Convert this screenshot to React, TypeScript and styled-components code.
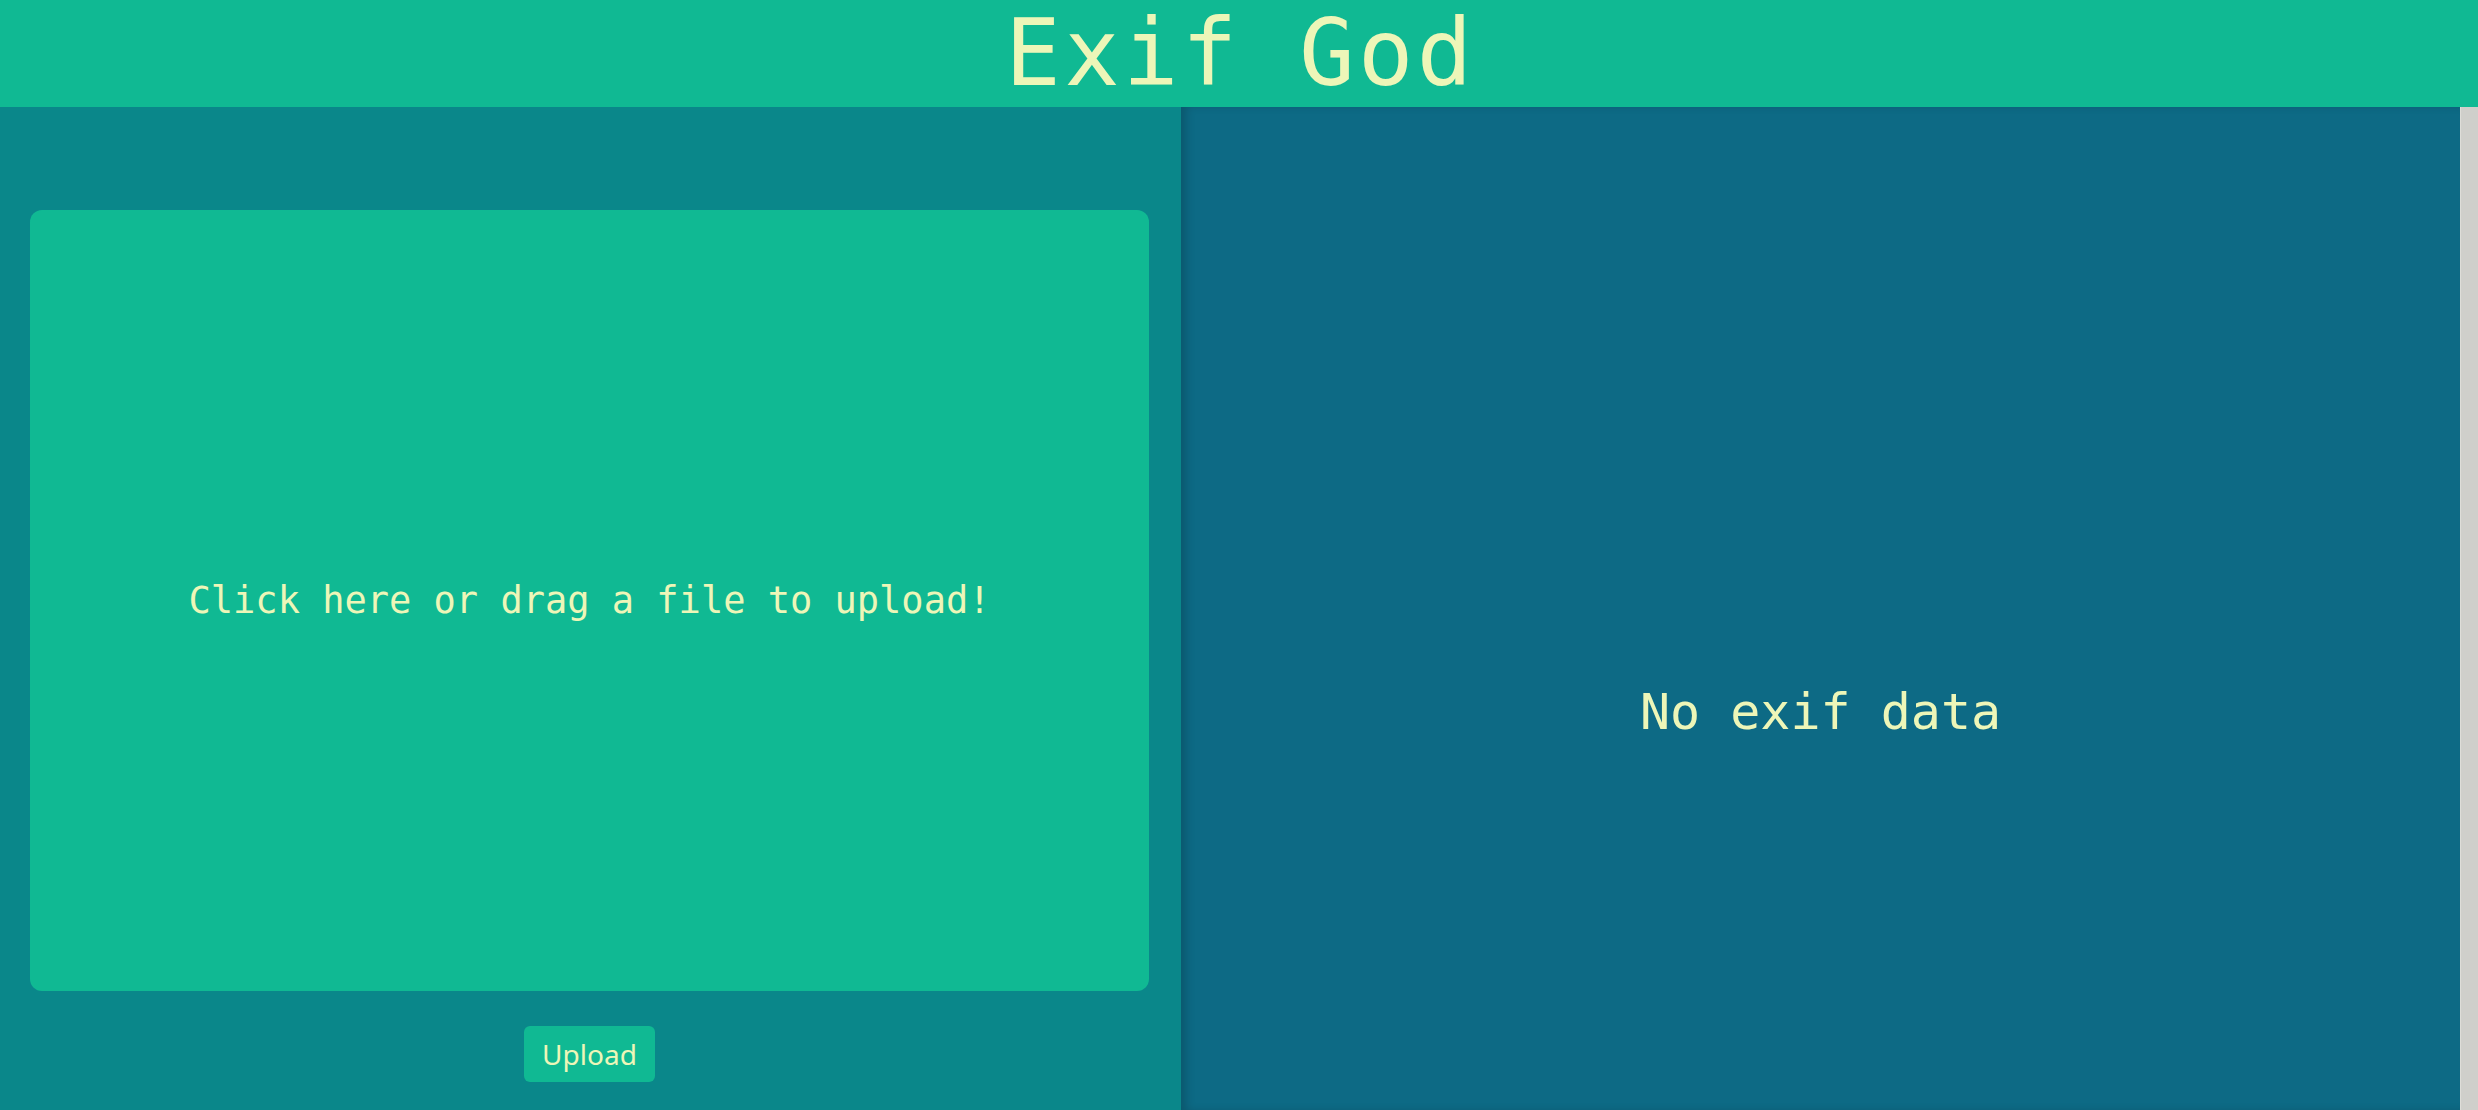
import React from 'react'
import styled, { createGlobalStyle } from 'styled-components'

const GlobalStyle = createGlobalStyle`
    html, body {
        margin: 0;
        padding: 0;
        height: 100%;
        overflow: hidden;
    }
    #root {
        height: 100%;
    }
    * {
        box-sizing: border-box;
    }
`

const mono = `"DejaVu Sans Mono", "Liberation Mono", monospace`

const Page = styled.div`
    height: 100vh;
    display: flex;
    flex-direction: column;
    background: #0a878a;
    overflow: hidden;
`

const Header = styled.header`
    height: 107px;
    flex-shrink: 0;
    background: #10b993;
    display: flex;
    justify-content: center;
    align-items: flex-start;
    padding-left: 3px;
`

const Title = styled.h1`
    margin: 0;
    font-family: ${mono};
    font-weight: 400;
    font-size: 92px;
    line-height: normal;
    letter-spacing: 3.4px;
    color: #edf6b8;
`

const Main = styled.main`
    flex: 1;
    min-height: 0;
    display: flex;
`

const UploadPane = styled.section`
    width: 1181px;
    flex-shrink: 0;
    background: #0a878a;
    padding: 103px 32px 0 30px;
    display: flex;
    flex-direction: column;
    align-items: center;
`

const DropZone = styled.div`
    width: 100%;
    height: 781px;
    flex-shrink: 0;
    background: #10b993;
    border-radius: 12px;
    display: flex;
    align-items: center;
    justify-content: center;
    cursor: pointer;
    font-family: ${mono};
    font-size: 37px;
    color: #edf6b8;
`

const UploadButton = styled.button`
    margin-top: 35px;
    width: 131px;
    height: 56px;
    flex-shrink: 0;
    border: none;
    border-radius: 6px;
    background: #10b993;
    color: #edf6b8;
    font-family: "Noto Sans", "Open Sans", sans-serif;
    font-size: 28px;
    padding: 0;
    cursor: pointer;
`

const ExifPane = styled.section`
    flex: 1;
    background: #0d6a85;
    box-shadow: inset 7px 0 10px -2px rgba(0, 0, 0, 0.18);
    display: flex;
    align-items: center;
    justify-content: center;
    padding-top: 206px;
`

const EmptyText = styled.span`
    font-family: ${mono};
    font-size: 50px;
    color: #edf6b8;
`

const ScrollTrack = styled.div`
    width: 18px;
    flex-shrink: 0;
    background: #cfcfcb;
    border-left: 1px solid #deded9;
`

const App: React.FC = () => {
    return (
        <>
            <GlobalStyle />
            <Page>
                <Header>
                    <Title>Exif God</Title>
                </Header>
                <Main>
                    <UploadPane>
                        <DropZone>Click here or drag a file to upload!</DropZone>
                        <UploadButton>Upload</UploadButton>
                    </UploadPane>
                    <ExifPane>
                        <EmptyText>No exif data</EmptyText>
                    </ExifPane>
                    <ScrollTrack />
                </Main>
            </Page>
        </>
    )
}

export default App
